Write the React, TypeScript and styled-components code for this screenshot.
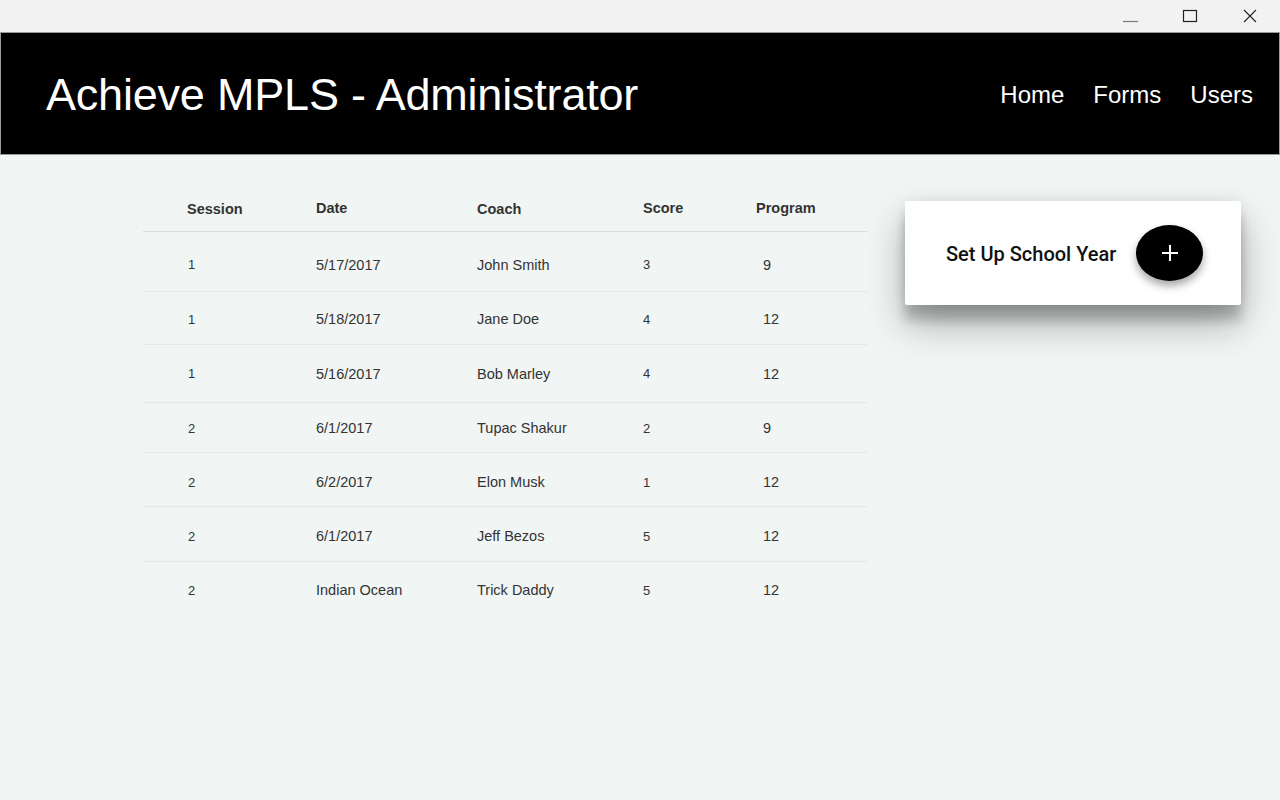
import * as React from 'react';
import styled, { createGlobalStyle } from 'styled-components';

const GlobalStyle = createGlobalStyle`
  html, body {
    margin: 0;
    padding: 0;
    background: #f1f6f4;
  }
  body {
    font-family: "Liberation Sans", Arial, sans-serif;
  }
`;

const Window = styled.div`
  width: 1280px;
  height: 800px;
  display: flex;
  flex-direction: column;
  background: #f1f6f4;
  overflow: hidden;
`;

const TitleBar = styled.div`
  height: 32px;
  background: #f2f2f2;
  display: flex;
  justify-content: flex-end;
  align-items: stretch;
`;

const WinButton = styled.div`
  width: 60px;
  display: flex;
  align-items: center;
  justify-content: center;
`;

const Header = styled.header`
  height: 121px;
  background: #000;
  border: 1px solid #9a9a9a;
  display: flex;
  align-items: center;
  justify-content: space-between;
  padding: 0 26px 0 45px;
`;

const AppTitle = styled.h1`
  margin: 0;
  font-family: "Liberation Sans", Arial, sans-serif;
  font-weight: normal;
  font-size: 45px;
  color: #fff;
  letter-spacing: -0.2px;
  padding-top: 2px;
`;

const Nav = styled.nav`
  display: flex;
  gap: 29px;
  padding-top: 2px;
`;

const NavLink = styled.a`
  font-size: 24px;
  color: #fff;
  text-decoration: none;
  cursor: pointer;
`;

const Content = styled.main`
  flex: 1;
  display: flex;
  align-items: flex-start;
  padding: 40px 0 0 143px;
`;

const Table = styled.div`
  width: 724px;
  display: flex;
  flex-direction: column;
`;

const cols = '44px 129px 161px 166px 113px 111px';

const HeadRow = styled.div`
  display: grid;
  grid-template-columns: ${cols};
  height: 37px;
  box-sizing: border-box;
  border-bottom: 1px solid #d9dcdb;
  align-items: center;
  padding-bottom: 8px;
`;

const HeadCell = styled.div<{ $dy?: number }>`
  font-size: 14.5px;
  font-weight: bold;
  color: #333;
  transform: translateY(${p => p.$dy ?? 0}px);
`;

const Row = styled.div<{ $h: number; $dy: number }>`
  display: grid;
  grid-template-columns: ${cols};
  height: ${p => p.$h}px;
  box-sizing: border-box;
  border-bottom: 1px solid #e4e8e6;
  align-items: center;
  padding-top: ${p => p.$dy * 2}px;
  &:last-child {
    border-bottom: none;
  }
`;

const Cell = styled.div<{ $pad?: number }>`
  font-size: 14.5px;
  color: #333;
  padding-left: ${p => p.$pad ?? 0}px;
`;

const NumCell = styled(Cell)`
  font-size: 13px;
`;

const Card = styled.div`
  margin-left: 38px;
  margin-top: 6px;
  width: 336px;
  height: 104px;
  background: #fff;
  border-radius: 2px;
  box-shadow: 0 19px 38px rgba(0, 0, 0, 0.3), 0 15px 12px rgba(0, 0, 0, 0.2), 0 0 12px rgba(0, 0, 0, 0.06);
  display: flex;
  align-items: center;
  padding: 0 38px 0 41px;
  box-sizing: border-box;
  justify-content: space-between;
`;

const CardLabel = styled.span`
  font-family: Roboto, "Noto Sans", sans-serif;
  font-weight: 500;
  font-size: 20px;
  color: #111;
  padding-top: 1px;
`;

const Fab = styled.button`
  width: 67px;
  height: 56px;
  border-radius: 50%;
  border: none;
  background: #000;
  display: flex;
  align-items: center;
  justify-content: center;
  box-shadow: 0 5px 8px rgba(0, 0, 0, 0.35);
  cursor: pointer;
  padding: 0;
`;

type Rec = {
  session: string;
  date: string;
  coach: string;
  score: string;
  program: string;
  h: number;
  dy: number;
};

const rows: Rec[] = [
  { session: '1', date: '5/17/2017', coach: 'John Smith', score: '3', program: '9', h: 60, dy: 3 },
  { session: '1', date: '5/18/2017', coach: 'Jane Doe', score: '4', program: '12', h: 53, dy: 1 },
  { session: '1', date: '5/16/2017', coach: 'Bob Marley', score: '4', program: '12', h: 58, dy: 0 },
  { session: '2', date: '6/1/2017', coach: 'Tupac Shakur', score: '2', program: '9', h: 50, dy: 0.5 },
  { session: '2', date: '6/2/2017', coach: 'Elon Musk', score: '1', program: '12', h: 54, dy: 2.5 },
  { session: '2', date: '6/1/2017', coach: 'Jeff Bezos', score: '5', program: '12', h: 55, dy: 2 },
  { session: '2', date: 'Indian Ocean', coach: 'Trick Daddy', score: '5', program: '12', h: 56, dy: 0 },
];

export default function App() {
  return (
    <Window>
      <GlobalStyle />
      <TitleBar>
        <WinButton>
          <svg width="16" height="16" viewBox="0 0 16 16">
            <line x1="1" y1="13.5" x2="16" y2="13.5" stroke="#777" strokeWidth="1.2" />
          </svg>
        </WinButton>
        <WinButton>
          <svg width="16" height="16" viewBox="0 0 16 16">
            <rect x="1.5" y="2.5" width="13" height="11" fill="none" stroke="#222" strokeWidth="1.2" />
          </svg>
        </WinButton>
        <WinButton>
          <svg width="16" height="16" viewBox="0 0 16 16">
            <path d="M2 2 L14 14 M14 2 L2 14" stroke="#222" strokeWidth="1.1" />
          </svg>
        </WinButton>
      </TitleBar>
      <Header>
        <AppTitle>Achieve MPLS - Administrator</AppTitle>
        <Nav>
          <NavLink>Home</NavLink>
          <NavLink>Forms</NavLink>
          <NavLink>Users</NavLink>
        </Nav>
      </Header>
      <Content>
        <Table>
          <HeadRow>
            <div />
            <HeadCell>Session</HeadCell>
            <HeadCell $dy={-1}>Date</HeadCell>
            <HeadCell>Coach</HeadCell>
            <HeadCell $dy={-1}>Score</HeadCell>
            <HeadCell $dy={-1}>Program</HeadCell>
          </HeadRow>
          {rows.map((r, i) => (
            <Row key={i} $h={r.h} $dy={r.dy}>
              <div />
              <NumCell $pad={1}>{r.session}</NumCell>
              <Cell>{r.date}</Cell>
              <Cell>{r.coach}</Cell>
              <NumCell>{r.score}</NumCell>
              <Cell $pad={7}>{r.program}</Cell>
            </Row>
          ))}
        </Table>
        <Card>
          <CardLabel>Set Up School Year</CardLabel>
          <Fab aria-label="Add">
            <svg width="20" height="20" viewBox="0 0 20 20">
              <path d="M10 2 V18 M2 10 H18" stroke="#fff" strokeWidth="2" />
            </svg>
          </Fab>
        </Card>
      </Content>
    </Window>
  );
}
